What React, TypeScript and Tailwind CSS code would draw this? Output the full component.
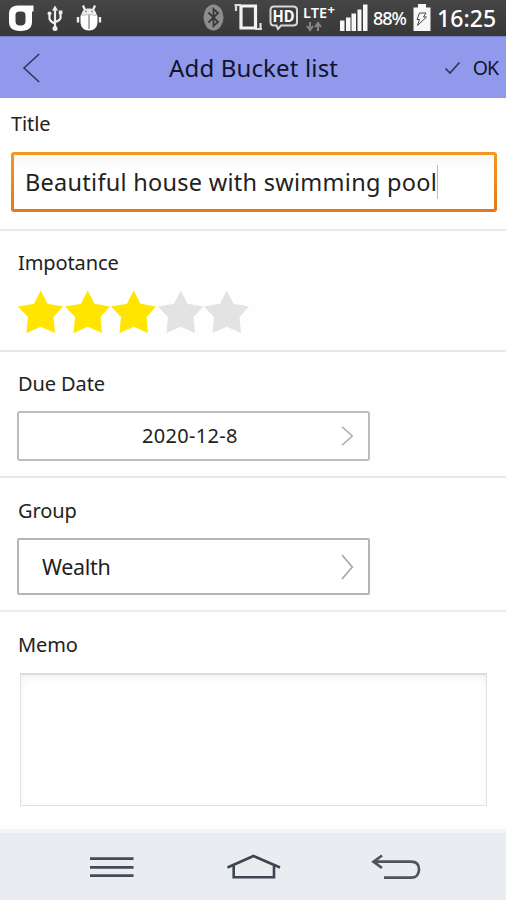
import type { ReactNode } from "react";

const FONT = "font-['Noto_Sans','Open_Sans',sans-serif]";

const rating = 3;

function StatusBar() {
  return (
    <div className="flex h-9 w-full items-start bg-linear-to-b from-[#454545] to-[#383838] text-white">
      <svg width="110" height="36" viewBox="0 0 110 36" fill="none" aria-hidden>
        <path
          d="M33.5 5.5H18C11.500 5.500 9 9 9 14.500V21.500C9 27.500 12 31 20.500 31S32 27.500 32 21.500V11.500H33.500ZM20.500 11.500C24.500 11.500 25.500 12.500 25.500 16V20.500C25.500 24 24.500 25.500 20.500 25.500S15.500 24 15.500 20.500V16C15.500 12.500 16.500 11.500 20.500 11.500Z"
          fill="#fff"
          fillRule="evenodd"
        />
        <path d="M55 9V28M49.500 14V18.500Q50 21.500 55 23.500M60.500 13V18Q60 20.500 55 22" stroke="#eee" strokeWidth="2.200" />
        <path d="M55 5.500L58 10.500H52Z" fill="#eee" />
        <circle cx="55" cy="28.500" r="2.500" fill="#eee" />
        <circle cx="49.500" cy="13.500" r="2" fill="#eee" />
        <rect x="58.800" y="10.500" width="3.600" height="3.600" fill="#eee" />
        <path d="M83 5.500L85 10M95 5.500L93 10" stroke="#f2f2f2" strokeWidth="2.200" />
        <path d="M81 17C81.500 11 84 8.500 89 8.500S96.500 11 97 17Z" fill="#eee" />
        <path d="M80.500 15.500H97.500V22C97.500 27 94 30.500 89 30.500S80.500 27 80.500 22Z" fill="#fff" />
        <path d="M82 15.500Q89 13 96 15.500" stroke="#c4c4c4" />
        <path d="M89 15V29" stroke="#777" strokeWidth="1.200" />
        <path d="M78 17V22.500M100 17V22.500" stroke="#eee" strokeWidth="2.400" />
        <circle cx="86" cy="11.500" r="0.900" fill="#888" />
        <circle cx="92" cy="11.500" r="0.900" fill="#888" />
      </svg>
      <svg className="ml-[90px]" width="172" height="36" viewBox="200 0 172 36" fill="none" aria-hidden>
        <ellipse cx="213.500" cy="17.500" rx="10" ry="13" fill="#8c8c8c" />
        <path d="M208.500 12.500L218 22L213.500 26V9L218 13L208.500 22.500" stroke="#393939" strokeWidth="1.800" />
        <path d="M241 6H255.500V28H241Z" stroke="#f2f2f2" strokeWidth="3.200" />
        <path d="M236 4V11M234.500 5H241M260.500 30V23M262 29H255" stroke="#ddd" strokeWidth="2.200" />
        <path
          d="M274 6.500H293Q297 6.500 297 10V22Q297 25.500 293 25.500H281L278 29L276.500 25.500H274Q270.500 25.500 270.500 22V10Q270.500 6.500 274 6.500Z"
          fill="#3d3d3d"
          stroke="#d8d8d8"
          strokeWidth="2"
        />
        <text x="272.500" y="22" fill="#fff" fontSize="16" fontWeight="700" textLength="22" lengthAdjust="spacingAndGlyphs">HD</text>
        <text x="303" y="17.500" fill="#fff" fontSize="14.500" fontWeight="600" textLength="24" lengthAdjust="spacingAndGlyphs">LTE</text>
        <text x="327.500" y="14" fill="#fff" fontSize="13" fontWeight="700">+</text>
        <path d="M310 22V29M307 26L310 30L313 26M318 31V24M315 27L318 23L321 27" stroke="#858585" strokeWidth="2" />
        <path d="M340 20.500H344.500V31H340ZM346 17.500H350.500V31H346ZM351.500 13.500H356V31H351.500ZM357.500 9.500H361.500V31H357.500ZM363 4.500H367.500V31H363Z" fill="#f7f7f7" />
      </svg>
      <span className="mt-[3px] ml-px w-[39px] text-[18px] leading-[30px] font-medium tracking-[-1px]">88%</span>
      <svg width="20" height="36" viewBox="411 0 20 36" fill="none" aria-hidden>
        <path d="M417 4H425V7.500H429.500V31H412.500V7.500H417Z" fill="#f7f7f7" />
        <path d="M418.500 13H425L422.500 17H425.500L416.500 25.500L418.500 19.500H416Z" stroke="#444" strokeWidth="1" />
      </svg>
      <span className="mt-[3px] ml-[5px] text-[23px] leading-[30px] font-medium tracking-[0.1px]">16:25</span>
    </div>
  );
}

function Header() {
  return (
    <header className="flex h-[62px] items-center border-t border-[#7783cf] bg-[#9099eb] text-[#10142c]">
      <button type="button" aria-label="Back" className="ml-[22px]">
        <svg width="20" height="32" viewBox="0 0 20 32" fill="none">
          <path d="M17.200 2L2 16L17.200 30" stroke="#303957" strokeWidth="1.600" />
        </svg>
      </button>
      <h1 className="ml-[127px] text-[24px] leading-8 tracking-[0.15px] whitespace-nowrap">Add Bucket list</h1>
      <button type="button" className="mr-[8px] ml-auto flex items-center gap-[12px] text-[19.500px] leading-8">
        <svg width="17" height="14" viewBox="0 0 17 14" fill="none" aria-hidden>
          <path d="M1.500 7.500L6 12L15.500 1.500" stroke="#303957" strokeWidth="1.700" />
        </svg>
        <span className="tracking-[-1px]">OK</span>
      </button>
    </header>
  );
}

function Label({ children }: { children: ReactNode }) {
  return <div className="h-7 text-[20px] leading-[28px] tracking-[-0.1px] text-[#222]">{children}</div>;
}

function Chevron({ tall }: { tall?: boolean }) {
  return (
    <svg className="mr-[14px] ml-auto" width="14" height={tall ? 26 : 20} viewBox="0 0 14 20" preserveAspectRatio="none" fill="none" aria-hidden>
      <path d="M2 0.800L12.300 10L2 19.200" stroke="#aaa" strokeWidth="1.500" />
    </svg>
  );
}

function Star({ filled }: { filled: boolean }) {
  return (
    <svg width="46.500" height="44" viewBox="0 0 46.500 44" aria-hidden>
      <path
        d="M22.700 0.500L29.500 13.800L45 16.500L35.500 27L37 43L22.700 36.800L8.500 43L10 27L0 16.500L16 13.800Z"
        className={filled ? "fill-[#ffe500]" : "fill-[#e3e3e3]"}
      />
    </svg>
  );
}

export default function App() {
  return (
    <div className={`flex h-[900px] w-[506px] flex-col overflow-hidden bg-[#fefefe] ${FONT}`}>
      <StatusBar />
      <Header />

      <main className="flex h-[731px] flex-col">
        <section className="h-[133px] border-b-2 border-[#e8e8e8] px-[11px] pt-3">
          <Label>Title</Label>
          <div className="mt-[14px] h-[60px] w-[486px] rounded-[3px] bg-linear-to-b from-[#f29a1f] to-[#e67817] p-[3px]">
            <div className="flex h-full items-center bg-linear-to-b from-[#f8f8f8] to-white to-30% pl-[11px]">
              <span className="text-[23.500px] leading-8 tracking-[0.27px] whitespace-nowrap text-[#222]">Beautiful house with swimming pool</span>
              <span className="h-[34px] w-px bg-[#bbb]" />
            </div>
          </div>
        </section>

        <section className="h-[121px] border-b-2 border-[#e8e8e8] px-[18px] pt-[18px]">
          <Label>Impotance</Label>
          <div className="mt-[13px] flex">
            {[1, 2, 3, 4, 5].map((n) => (
              <Star key={n} filled={n <= rating} />
            ))}
          </div>
        </section>

        <section className="h-[126px] border-b-2 border-[#e8e8e8] px-[17px] pt-[18px]">
          <div className="pl-px tracking-tight">
            <Label>Due Date</Label>
          </div>
          <button type="button" className="mt-[13px] flex h-[50px] w-[353px] items-center rounded-[3px] border-2 border-[#bdbdbd] bg-white">
            <span className="ml-[123px] text-[20px] leading-7 tracking-[0.3px] text-[#222]">2020-12-8</span>
            <Chevron />
          </button>
        </section>

        <section className="h-[134px] border-b-2 border-[#ececec] px-[17px] pt-[19px]">
          <div className="pl-px">
            <Label>Group</Label>
          </div>
          <button type="button" className="mt-[13px] flex h-[57px] w-[353px] items-center rounded-[2px] border-2 border-[#b5b5b5] bg-white">
            <span className="ml-[23px] text-[21.500px] leading-7 tracking-[-0.3px] text-[#222]">Wealth</span>
            <Chevron tall />
          </button>
        </section>

        <section className="px-[18px] pt-[19px]">
          <Label>Memo</Label>
          <div className="mt-[14px] ml-[2px] h-[133px] w-[467px] border border-t-2 border-[#e2e2e2] border-t-[#dcdcdc] bg-white shadow-[inset_0_3px_7px_#f2f2f2]" />
        </section>
      </main>

      <nav className="flex h-[71px] w-full border-t-4 border-[#f4f5f7] bg-[#e9ecf0]">
        <svg className="ml-[89px]" width="46" height="67" viewBox="89 833 46 67" fill="none" aria-hidden>
          <path d="M90 858.700H133.500M90 867.300H133.500M90 875.600H133.500" stroke="#454b56" strokeWidth="2.700" />
        </svg>
        <svg className="ml-[91px]" width="56" height="67" viewBox="226 833 56 67" fill="none" aria-hidden>
          <path d="M227.500 867.500L253.500 856L280 867.500M233.700 865.500V877.300H274V865.500" stroke="#3e4550" strokeWidth="2.600" />
        </svg>
        <svg className="ml-[88px]" width="52" height="67" viewBox="370 833 52 67" fill="none" aria-hidden>
          <path d="M382 855.500L373.500 861.700L382 868M374 861.700H411C416 861.700 419 864.500 419 869.500S416 877.700 411 877.700H384" stroke="#4f545d" strokeWidth="2.700" />
        </svg>
      </nav>
    </div>
  );
}
